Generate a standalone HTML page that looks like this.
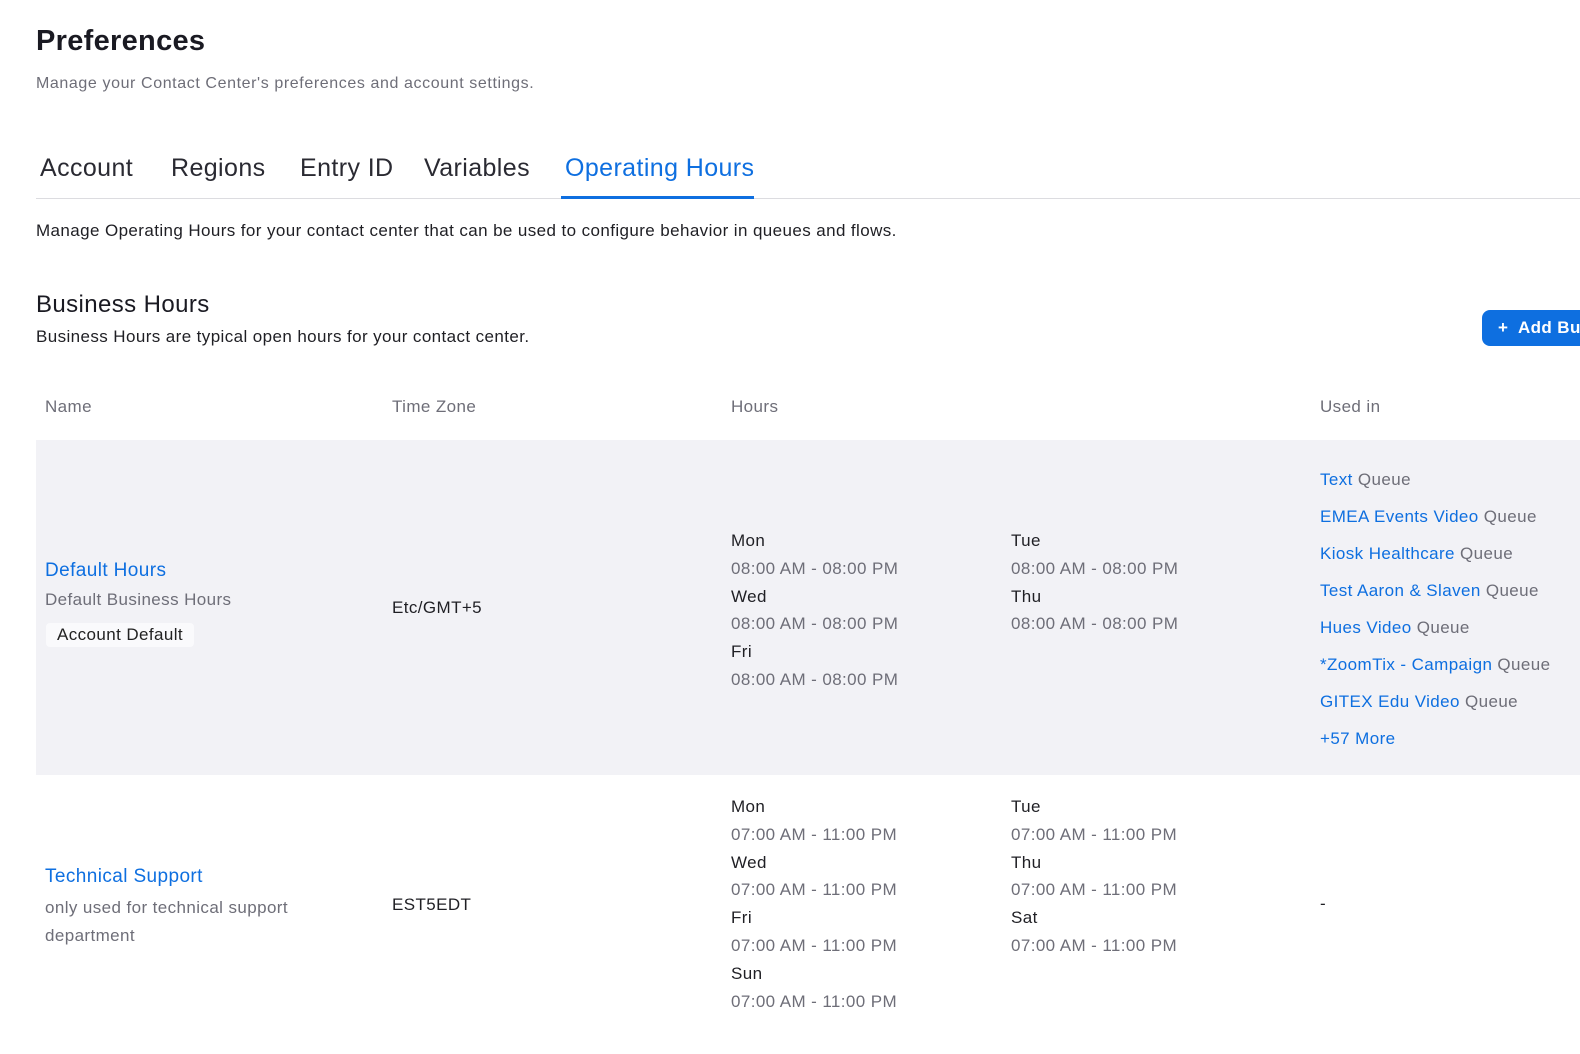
<!DOCTYPE html>
<html><head><style>
body{margin:0;width:1580px;height:1054px;overflow:hidden;background:#fff;font-family:"Liberation Sans",sans-serif;position:relative;color:#222;letter-spacing:0.4px}
.a{position:absolute;white-space:nowrap}
.b{color:#0e6fe0}
.g{color:#6e6e78}
.h{font-size:17px;color:#1f1f24}
.t{font-size:17px;color:#6e6e78}
</style></head><body>
<div class="a" style="left:36px;top:25px;font-size:29px;font-weight:bold;color:#1a1a22;letter-spacing:0.3px">Preferences</div>
<div class="a g" style="left:36px;top:75px;font-size:16px;letter-spacing:0.6px">Manage your Contact Center's preferences and account settings.</div>
<div class="a" style="left:40px;top:154px;font-size:25px;color:#2a2a32">Account</div>
<div class="a" style="left:171px;top:154px;font-size:25px;color:#2a2a32">Regions</div>
<div class="a" style="left:300px;top:154px;font-size:25px;color:#2a2a32">Entry ID</div>
<div class="a" style="left:424px;top:154px;font-size:25px;color:#2a2a32">Variables</div>
<div class="a b" style="left:565px;top:154px;font-size:25px">Operating Hours</div>
<div class="a" style="left:36px;top:198px;width:1544px;height:1px;background:#dcdce0"></div>
<div class="a" style="left:561px;top:196px;width:193px;height:3px;background:#0e6fe0"></div>
<div class="a h" style="left:36px;top:221px">Manage Operating Hours for your contact center that can be used to configure behavior in queues and flows.</div>
<div class="a" style="left:36px;top:291px;font-size:24px;color:#1a1a22">Business Hours</div>
<div class="a h" style="left:36px;top:327px">Business Hours are typical open hours for your contact center.</div>
<div class="a" style="left:1482px;top:310px;width:98px;height:36px;overflow:hidden;background:#0e6fe0;border-radius:8px 0 0 8px;color:#fff;font-size:17px;font-weight:bold;line-height:36px"><span style="padding-left:16px">+&nbsp; Add Business</span></div>
<div class="a t" style="left:45px;top:397px">Name</div>
<div class="a t" style="left:392px;top:397px">Time Zone</div>
<div class="a t" style="left:731px;top:397px">Hours</div>
<div class="a t" style="left:1320px;top:397px">Used in</div>
<div class="a" style="left:36px;top:440px;width:1544px;height:335px;background:#f2f2f6"></div>
<div class="a b" style="left:45px;top:560px;font-size:19px">Default Hours</div>
<div class="a g" style="left:45px;top:590px;font-size:17px">Default Business Hours</div>
<div class="a" style="left:46px;top:623px;padding:2px 11px;background:#fafafc;border-radius:4px;font-size:17px;color:#222">Account Default</div>
<div class="a h" style="left:392px;top:598px">Etc/GMT+5</div>
<div class="a" style="left:731px;top:527px;font-size:17px;line-height:27.8px;color:#1f1f24">Mon<br><span class="g">08:00 AM - 08:00 PM</span><br>Wed<br><span class="g">08:00 AM - 08:00 PM</span><br>Fri<br><span class="g">08:00 AM - 08:00 PM</span></div>
<div class="a" style="left:1011px;top:527px;font-size:17px;line-height:27.8px;color:#1f1f24">Tue<br><span class="g">08:00 AM - 08:00 PM</span><br>Thu<br><span class="g">08:00 AM - 08:00 PM</span></div>
<div class="a" style="left:1320px;top:461px;font-size:17px;line-height:37px">
<span class="b">Text</span> <span class="g">Queue</span><br>
<span class="b">EMEA Events Video</span> <span class="g">Queue</span><br>
<span class="b">Kiosk Healthcare</span> <span class="g">Queue</span><br>
<span class="b">Test Aaron &amp; Slaven</span> <span class="g">Queue</span><br>
<span class="b">Hues Video</span> <span class="g">Queue</span><br>
<span class="b">*ZoomTix - Campaign</span> <span class="g">Queue</span><br>
<span class="b">GITEX Edu Video</span> <span class="g">Queue</span><br>
<span class="b">+57 More</span></div>
<div class="a b" style="left:45px;top:866px;font-size:19px">Technical Support</div>
<div class="a g" style="left:45px;top:894px;font-size:17px;line-height:28px">only used for technical support<br>department</div>
<div class="a h" style="left:392px;top:895px">EST5EDT</div>
<div class="a" style="left:731px;top:793px;font-size:17px;line-height:27.8px;color:#1f1f24">Mon<br><span class="g">07:00 AM - 11:00 PM</span><br>Wed<br><span class="g">07:00 AM - 11:00 PM</span><br>Fri<br><span class="g">07:00 AM - 11:00 PM</span><br>Sun<br><span class="g">07:00 AM - 11:00 PM</span></div>
<div class="a" style="left:1011px;top:793px;font-size:17px;line-height:27.8px;color:#1f1f24">Tue<br><span class="g">07:00 AM - 11:00 PM</span><br>Thu<br><span class="g">07:00 AM - 11:00 PM</span><br>Sat<br><span class="g">07:00 AM - 11:00 PM</span></div>
<div class="a h" style="left:1320px;top:894px">-</div>
</body></html>
